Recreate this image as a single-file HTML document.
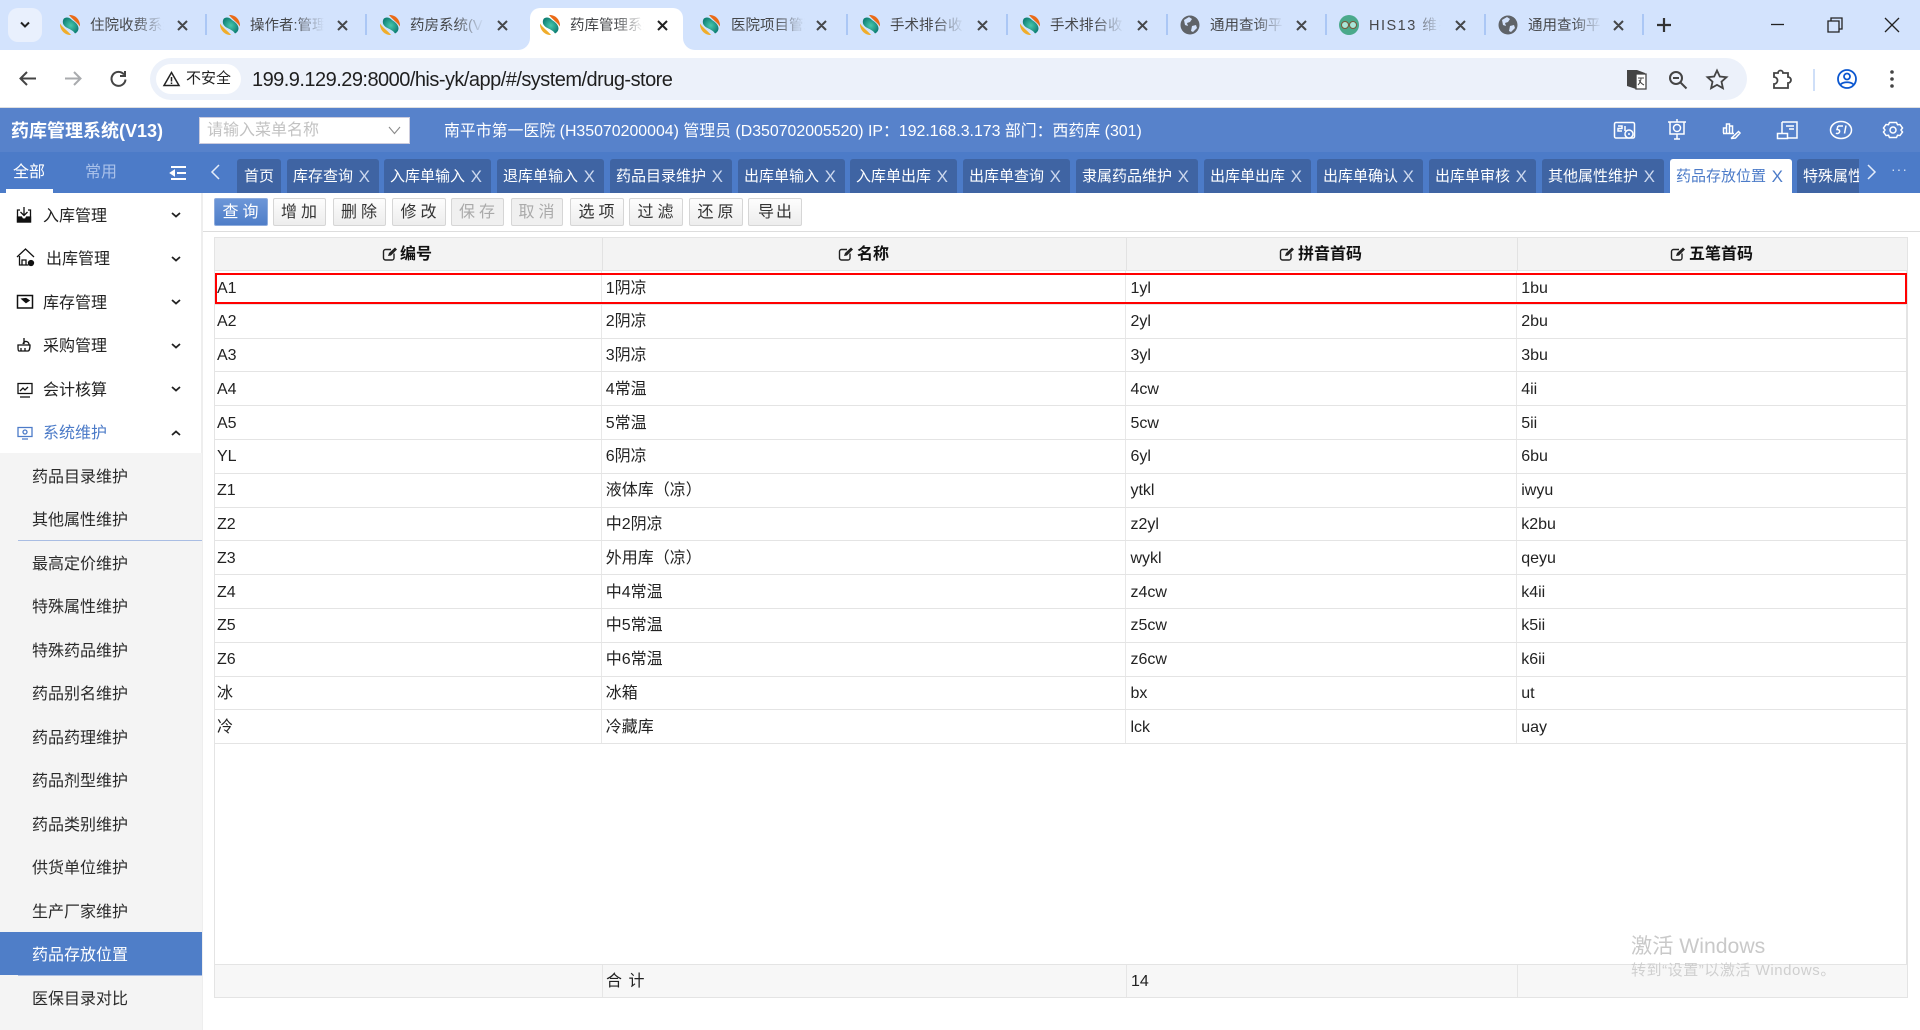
<!DOCTYPE html>
<html lang="zh-CN"><head><meta charset="utf-8"><title>药库管理系统</title>
<style>
*{box-sizing:border-box}
html,body{margin:0;padding:0;width:1920px;height:1030px;overflow:hidden;background:#fff;font-family:"Liberation Sans","Noto Sans CJK SC",sans-serif;color:#222}
.a{position:absolute;white-space:nowrap}
svg{position:absolute;overflow:visible}
.ttl{position:absolute;top:15px;height:22px;line-height:22px;font-size:14.5px;color:#45474a;width:74px;overflow:hidden;white-space:nowrap;-webkit-mask-image:linear-gradient(90deg,#000 60%,transparent 100%);mask-image:linear-gradient(90deg,#000 60%,transparent 100%)}
.sep{position:absolute;top:14px;width:2px;height:21px;background:#abc7f5}
.t{position:absolute;top:159px;height:34px;background:#3f64a3;color:#fff;font-size:15px;line-height:36px;border-radius:3px 3px 0 0;white-space:nowrap;overflow:hidden;padding-left:6px}
.t i{font-style:normal;font-size:17px;color:#ccd8ee;position:absolute;right:9px;top:0}
.b{position:absolute;top:198px;height:28px;border:1px solid #d6d6d6;border-radius:2px;background:linear-gradient(#fdfdfd,#ededed);font-size:16px;line-height:27px;text-align:center;letter-spacing:4px;padding-left:3px;color:#333}
.b.p{background:linear-gradient(#6c96d8,#4f7ec8);border-color:#8eacdd;color:#fff}
.b.d{background:#f0f0f0;color:#aaa}
.m{position:absolute;left:43px;font-size:16px;line-height:22px;white-space:nowrap;color:#222}
.s{position:absolute;left:32px;font-size:16px;line-height:22px;white-space:nowrap;color:#2a2a2a}
.r{display:flex;height:33.8px;border-bottom:1px solid #e4e4e4;font-size:16px;line-height:31px}
.r div{height:100%;border-right:1px solid #e8e8e8;padding:1.5px 0 0 4px;white-space:nowrap;overflow:hidden}
.r .c1{padding-left:2px}
.c1{width:387px}.c2{width:525px}.c3{width:391px}.c4{width:390px;border-right:0!important}
.h{position:absolute;top:238px;height:33px;font-size:16px;font-weight:bold;line-height:33px;color:#111;white-space:nowrap}
.ic{fill:none;stroke:#fff;stroke-width:1.5}
.mi{fill:none;stroke:#111;stroke-width:1.3}
</style></head><body>
<svg width="0" height="0" style="position:absolute"><defs>
<radialGradient id="tg" cx=".5" cy=".5" r=".55"><stop offset="0" stop-color="#47c6ad"/><stop offset="1" stop-color="#0f7f73"/></radialGradient>
<symbol id="fav" viewBox="0 0 20 20"><path d="M9 0C15.500-.5 20.500 5 20 11.500 17 7 13 5 9 0z" fill="#ea6a16"/><path d="M0 8.500C-.5 15 5 20.500 11 20 7 15 3 13 0 8.500z" fill="#f0ad2b"/><path d="M3.500 4C6 1.500 9.500 2.500 12 5c3 2 6 4 6.500 8 .2 2.500-1.500 4.500-3.500 5.500-1.500-2.500-4.500-4-7.500-5.500C4 11.500 1.500 8 3.500 4z" fill="url(#tg)"/></symbol>
<symbol id="globe" viewBox="0 0 20 20"><circle cx="10" cy="10" r="9.500" fill="#5f6368"/><path d="M4 5l5-3 3 2-2 3-3 1 1 3-3-1zM12 11l4-1 1 3-4 4-2-1z" fill="#d3e2fb"/></symbol>
<symbol id="edit" viewBox="0 0 16 16"><path d="M12 7.500V12a2 2 0 0 1-2 2H3.500a2 2 0 0 1-2-2V5.500a2 2 0 0 1 2-2H9" fill="none" stroke="#222" stroke-width="1.400"/><path d="M6 10l1-3 6-5.500 2 2L9 9.500z" fill="#222"/></symbol>
</defs></svg>

<!-- browser tab strip -->
<div class="a" style="left:0;top:0;width:1920px;height:50px;background:#d3e3fd"></div>
<div class="a" style="left:8px;top:8px;width:34px;height:34px;border-radius:10px;background:#e9f0fd"></div>
<svg style="left:20px;top:21px" width="10" height="8"><path d="M1 1.500l4 4 4-4" fill="none" stroke="#222" stroke-width="2"/></svg>
<div class="a" style="left:530px;top:8px;width:153px;height:42px;background:#fff;border-radius:10px 10px 0 0"></div>
<svg style="left:518px;top:38px" width="177" height="12"><path d="M0 12a12 12 0 0 0 12-12v12zM177 12a12 12 0 0 1-12-12v12z" fill="#fff"/></svg>

<svg style="left:60px;top:15px" width="20" height="20"><use href="#fav"/></svg><div class="ttl" style="left:90px">住院收费系统</div>
<svg style="left:220px;top:15px" width="20" height="20"><use href="#fav"/></svg><div class="ttl" style="left:250px">操作者:管理员</div>
<svg style="left:380px;top:15px" width="20" height="20"><use href="#fav"/></svg><div class="ttl" style="left:410px">药房系统(V13)</div>
<svg style="left:540px;top:15px" width="20" height="20"><use href="#fav"/></svg><div class="ttl" style="left:570px">药库管理系统</div>
<svg style="left:700px;top:15px" width="20" height="20"><use href="#fav"/></svg><div class="ttl" style="left:731px">医院项目管理</div>
<svg style="left:860px;top:15px" width="20" height="20"><use href="#fav"/></svg><div class="ttl" style="left:890px">手术排台收费</div>
<svg style="left:1020px;top:15px" width="20" height="20"><use href="#fav"/></svg><div class="ttl" style="left:1050px">手术排台收费</div>
<svg style="left:1180px;top:15px" width="20" height="20"><use href="#globe"/></svg><div class="ttl" style="left:1210px">通用查询平台</div>
<svg style="left:1339px;top:15px" width="20" height="20"><circle cx="10" cy="10" r="10" fill="#4aa98b"/><circle cx="6" cy="10" r="3.500" fill="#a9e6d8" stroke="#7a5a3a"/><circle cx="14" cy="10" r="3.500" fill="#a9e6d8" stroke="#7a5a3a"/></svg><div class="ttl" style="left:1369px;letter-spacing:1.500px;width:72px">HIS13 维护</div>
<svg style="left:1498px;top:15px" width="20" height="20"><use href="#globe"/></svg><div class="ttl" style="left:1528px">通用查询平台</div>

<svg style="left:0;top:0" width="1680" height="50"><g fill="none" stroke="#45474a" stroke-width="2"><path d="M178 21l9 9m0-9l-9 9M338 21l9 9m0-9l-9 9M498 21l9 9m0-9l-9 9M817 21l9 9m0-9l-9 9M978 21l9 9m0-9l-9 9M1138 21l9 9m0-9l-9 9M1297 21l9 9m0-9l-9 9M1456 21l9 9m0-9l-9 9M1614 21l9 9m0-9l-9 9"/><path d="M658 21l9 9m0-9l-9 9" stroke="#222"/><path d="M1664 18v14M1657 25h14" stroke="#333" stroke-width="2.200"/></g></svg>
<div class="sep" style="left:205px"></div><div class="sep" style="left:365px"></div><div class="sep" style="left:846px"></div><div class="sep" style="left:1006px"></div><div class="sep" style="left:1166px"></div><div class="sep" style="left:1325px"></div><div class="sep" style="left:1484px"></div><div class="sep" style="left:1642px"></div>
<svg style="left:1770px;top:15px" width="140" height="20"><g fill="none" stroke="#222" stroke-width="1.300"><path d="M1 9.500h13"/><path d="M58 6h11v11H58zM61 6V3h11v11h-3"/><path d="M115 3l14 14m0-14l-14 14"/></g></svg>

<!-- address bar -->
<div class="a" style="left:0;top:50px;width:1920px;height:57px;background:#fff;border-radius:10px 10px 0 0"></div>
<div class="a" style="left:150px;top:58px;width:1597px;height:42px;border-radius:21px;background:#ecf1fa"></div>
<div class="a" style="left:156px;top:64px;width:85px;height:30px;border-radius:15px;background:#fff"></div>
<svg style="left:18px;top:68px" width="110" height="22"><g fill="none" stroke="#444" stroke-width="2"><path d="M18 10.500H3M9 4l-6.500 6.500L9 17"/><path d="M62 10.500H47M56 4l6.500 6.500L56 17" stroke="#a9abae"/><path d="M106 6.500a7 7 0 1 0 1.500 5M107 3v5h-5"/></g></svg>
<svg style="left:163px;top:71px" width="17" height="16"><path d="M8.500 1.500L16 14.500H1zM8.500 6v4.500M8.500 11.500v1.500" fill="none" stroke="#222" stroke-width="1.500"/></svg>
<div class="a" style="left:186px;top:68px;font-size:15px;line-height:22px;color:#222">不安全</div>
<div class="a" style="left:252px;top:67px;font-size:20px;line-height:26px;color:#1f1f1f;letter-spacing:-.53px">199.9.129.29:8000/his-yk/app/#/system/drug-store</div>
<svg style="left:1625px;top:68px" width="280" height="24"><g fill="none" stroke="#444" stroke-width="2"><path d="M2 2h10l8 3v15l-9 1-9-3z" fill="#444" stroke="none"/><path d="M11 6h10v15H11z" fill="#fff" stroke="#444" stroke-width="1.300"/><path d="M13 10h6M16 10c0 4-2 6-3 7m1-5c1 2 3 4 5 5" stroke-width="1"/><circle cx="51" cy="10" r="6"/><path d="M48 10h6M55.500 14.500l6 6"/><path d="M92 2.500l2.800 6 6.700.7-5 4.500 1.400 6.500-5.900-3.300-5.900 3.300 1.400-6.500-5-4.500 6.700-.7z" stroke-width="1.800"/><path d="M149 5h4a2.500 2.500 0 0 1 5 0h5v4a2.500 2.500 0 0 1 0 6v5h-14v-4a3 3 0 0 0 0-7z" stroke-width="1.800"/></g><path d="M189 1v22" stroke="#cfdff8" stroke-width="2"/><circle cx="222" cy="11" r="9" fill="none" stroke="#0b57d0" stroke-width="1.800"/><circle cx="222" cy="8.500" r="3" fill="none" stroke="#0b57d0" stroke-width="1.800"/><path d="M215.500 16.500c3-3 10-3 13 0" fill="none" stroke="#0b57d0" stroke-width="1.800"/><circle cx="267" cy="4" r="1.800" fill="#444"/><circle cx="267" cy="11" r="1.800" fill="#444"/><circle cx="267" cy="18" r="1.800" fill="#444"/></svg>
<div class="a" style="left:0;top:107px;width:1920px;height:2px;background:#dfdfdf"></div>

<!-- app header -->
<div class="a" style="left:0;top:108px;width:1920px;height:44px;background:#5782cb"></div>
<div class="a" style="left:11px;top:119px;font-size:18px;font-weight:bold;line-height:24px;color:#fff">药库管理系统(V13)</div>
<div class="a" style="left:199px;top:117px;width:211px;height:27px;background:#fff;border:1px solid #ccd;font-size:16px;line-height:26px;padding-left:7px;color:#c2c2c2">请输入菜单名称</div>
<svg style="left:388px;top:126px" width="13" height="9"><path d="M1 1l5.500 6.500L12 1" fill="none" stroke="#8a8a8a" stroke-width="1.100"/></svg>
<div class="a" style="left:444px;top:121px;font-size:15.900px;line-height:22px;color:#fff">南平市第一医院 (H35070200004) 管理员 (D350702005520) IP：192.168.3.173 部门：西药库 (301)</div>
<svg style="left:1610px;top:115px" width="300" height="30"><g class="ic">
<rect x="4.500" y="7.500" width="20" height="15.500" rx="1.500"/><circle cx="19" cy="19" r="4" fill="#5782cb"/><path d="M18 19h2M8 11h4v2.500H8V16h4M15 11v5"/>
<path d="M58 7h18M60 7v12h14V7M67 19v5M64 24h6M67 4v3"/><circle cx="67" cy="13" r="3.500"/>
<path d="M113.500 18v-5h3v5M116.500 18V9h3v9M119.500 18v-7h3v7M113 18.500h11M121 23.500l7-6.500M121 23.500l4.500-.5 4.500-5-2-2"/>
<path d="M172 7h15v16h-10M172 7v11M167.500 18.500h10v5h-10zM176 11h8M179 14h5"/>
<ellipse cx="231" cy="15" rx="10.500" ry="8.500"/><path d="M228 11h5M228 11l-1 3.500c2 0 3 1 2.500 2.500s-2.500 2-3.500 1M236 10.500l-1.500 8"/>
<path d="M279.500 7.500h7l1 2.200 2.500-.2 2.500 3.500-1.500 2 1.500 2-2.500 3.500-2.500-.2-1 2.200h-7l-1-2.200-2.500.2-2.500-3.500 1.500-2-1.500-2 2.500-3.500 2.500.2z"/><circle cx="283" cy="15" r="3"/>
</g></svg>

<!-- tab row -->
<div class="a" style="left:0;top:152px;width:1920px;height:41px;background:#4c7bc8"></div>
<div class="a" style="left:13px;top:162px;font-size:16px;line-height:22px;color:#fff">全部</div>
<div class="a" style="left:85px;top:162px;font-size:16px;line-height:22px;color:#a9c1ea">常用</div>
<div class="a" style="left:6px;top:189px;width:47px;height:4px;background:#fff"></div>
<svg style="left:171px;top:166px" width="15" height="14"><path d="M0 1h15M6 7h9M0 13h15M0 7l3-2v4z" fill="none" stroke="#fff" stroke-width="2"/></svg>
<svg style="left:210px;top:164px" width="11" height="16"><path d="M9 1L2 8l7 7" fill="none" stroke="#e4ecf9" stroke-width="1.500"/></svg>
<div class="t" style="left:237px;width:44px;padding-left:7px">首页</div>
<div class="t" style="left:287px;width:92px">库存查询<i>X</i></div>
<div class="t" style="left:384px;width:107px">入库单输入<i>X</i></div>
<div class="t" style="left:497px;width:107px">退库单输入<i>X</i></div>
<div class="t" style="left:610px;width:122px">药品目录维护<i>X</i></div>
<div class="t" style="left:738px;width:107px">出库单输入<i>X</i></div>
<div class="t" style="left:850px;width:107px">入库单出库<i>X</i></div>
<div class="t" style="left:963px;width:107px">出库单查询<i>X</i></div>
<div class="t" style="left:1076px;width:122px">隶属药品维护<i>X</i></div>
<div class="t" style="left:1204px;width:107px">出库单出库<i>X</i></div>
<div class="t" style="left:1317px;width:106px">出库单确认<i>X</i></div>
<div class="t" style="left:1429px;width:107px">出库单审核<i>X</i></div>
<div class="t" style="left:1542px;width:122px">其他属性维护<i>X</i></div>
<div class="t" style="left:1670px;width:122px;background:#fff;color:#4c7bc8">药品存放位置<i style="color:#4c7bc8">X</i></div>
<div class="t" style="left:1797px;width:62px;border-radius:3px 0 0 0">特殊属性维护</div>
<svg style="left:1866px;top:164px" width="11" height="16"><path d="M2 1l7 7-7 7" fill="none" stroke="#e4ecf9" stroke-width="1.500"/></svg>
<div class="a" style="left:1891px;top:160px;font-size:14px;line-height:18px;color:#d5e0f4;letter-spacing:1px">···</div>

<!-- sidebar -->
<div class="a" style="left:0;top:193px;width:203px;height:837px;background:#fff;border-right:2px solid #eee"></div>
<div class="a" style="left:0;top:453px;width:202px;height:577px;background:#f4f4f4"></div>
<svg style="left:14px;top:206px" width="170" height="240"><g class="mi">
<path d="M6 4H3.500v12h13V4H14M10 1v8M6.500 6L10 9.500 13.500 6"/><path d="M3.500 11h4l1 2h3l1-2h4v5h-13z" fill="#111"/>
<path d="M3 51l8.500-8 8.500 8M5.500 50v9h9M8 59v-5h4v5"/><circle cx="17" cy="57" r="2.500" fill="#111"/>
<path d="M3.500 89.500h15v12.500h-15z" stroke-width="1.500"/><path d="M8 93l4 3.500 3-2-3-2z" fill="#111"/>
<path d="M10 132v6M5 139h10a3 3 0 0 0-6-1M4 139h12c0 4-1 6-2 6H5c-1 0-1-3-1-6zM7 142v3M11 142v3"/>
<path d="M4 177.500h14v10H4zM6 191h10M6 185l3-3 2 2 3-3"/>
<path d="M4 221.500h14v9H4zM8 233h6" stroke="#4c7bc8"/><circle cx="11" cy="226" r="2" stroke="#4c7bc8"/>
</g><g fill="none" stroke="#222" stroke-width="1.800"><path d="M158 7l4 3.500L166 7M158 51l4 3.500 4-3.500M158 94l4 3.500 4-3.500M158 138l4 3.500 4-3.500M158 181l4 3.500 4-3.500M158 229l4-3.500 4 3.500"/></g></svg>
<div class="m" style="top:206px">入库管理</div>
<div class="m" style="top:249px;left:46px">出库管理</div>
<div class="m" style="top:293px">库存管理</div>
<div class="m" style="top:336px">采购管理</div>
<div class="m" style="top:380px">会计核算</div>
<div class="m" style="top:423px;color:#4c7bc8">系统维护</div>
<div class="s" style="top:467px">药品目录维护</div>
<div class="s" style="top:510px">其他属性维护</div>
<div class="a" style="left:18px;top:540px;width:184px;height:1px;background:#a9bde3"></div>
<div class="s" style="top:554px">最高定价维护</div>
<div class="s" style="top:597px">特殊属性维护</div>
<div class="s" style="top:641px">特殊药品维护</div>
<div class="s" style="top:684px">药品别名维护</div>
<div class="s" style="top:728px">药品药理维护</div>
<div class="s" style="top:771px">药品剂型维护</div>
<div class="s" style="top:815px">药品类别维护</div>
<div class="s" style="top:858px">供货单位维护</div>
<div class="s" style="top:902px">生产厂家维护</div>
<div class="a" style="left:0;top:932px;width:202px;height:43px;background:#4f7ec8"></div>
<div class="a" style="left:18px;top:975px;width:184px;height:1px;background:#a9bde3"></div>
<div class="s" style="top:945px;color:#fff">药品存放位置</div>
<div class="s" style="top:989px">医保目录对比</div>

<!-- toolbar -->
<div class="b p" style="left:214px;width:54px">查询</div>
<div class="b" style="left:273px;width:53px">增加</div>
<div class="b" style="left:333px;width:53px">删除</div>
<div class="b" style="left:392px;width:54px">修改</div>
<div class="b d" style="left:451px;width:53px">保存</div>
<div class="b d" style="left:511px;width:52px">取消</div>
<div class="b" style="left:570px;width:54px">选项</div>
<div class="b" style="left:629px;width:54px">过滤</div>
<div class="b" style="left:689px;width:54px">还原</div>
<div class="b" style="left:748px;width:54px;letter-spacing:2px;padding-left:2px">导出</div>
<div class="a" style="left:203px;top:231px;width:1717px;height:1px;background:#ddd"></div>

<!-- table -->
<div class="a" style="left:214px;top:237px;width:1694px;height:761px;border:1px solid #e4e4e4;border-width:1px 2px 2px 1px"></div>
<div class="a" style="left:215px;top:238px;width:1692px;height:33px;background:#f3f3f3;border-bottom:1px solid #e4e4e4"></div>
<div class="a" style="left:602px;top:238px;width:1px;height:32px;background:#e2e2e2"></div>
<div class="a" style="left:1126px;top:238px;width:1px;height:32px;background:#e2e2e2"></div>
<div class="a" style="left:1517px;top:238px;width:1px;height:32px;background:#e2e2e2"></div>
<svg style="left:382px;top:246px" width="16" height="16"><use href="#edit"/></svg><div class="h" style="left:400px">编号</div>
<svg style="left:838px;top:246px" width="16" height="16"><use href="#edit"/></svg><div class="h" style="left:857px">名称</div>
<svg style="left:1279px;top:246px" width="16" height="16"><use href="#edit"/></svg><div class="h" style="left:1298px">拼音首码</div>
<svg style="left:1670px;top:246px" width="16" height="16"><use href="#edit"/></svg><div class="h" style="left:1689px">五笔首码</div>

<div class="a" style="left:215px;top:271px;width:1692px">
<div class="r"><div class="c1">A1</div><div class="c2">1阴凉</div><div class="c3">1yl</div><div class="c4">1bu</div></div>
<div class="r"><div class="c1">A2</div><div class="c2">2阴凉</div><div class="c3">2yl</div><div class="c4">2bu</div></div>
<div class="r"><div class="c1">A3</div><div class="c2">3阴凉</div><div class="c3">3yl</div><div class="c4">3bu</div></div>
<div class="r"><div class="c1">A4</div><div class="c2">4常温</div><div class="c3">4cw</div><div class="c4">4ii</div></div>
<div class="r"><div class="c1">A5</div><div class="c2">5常温</div><div class="c3">5cw</div><div class="c4">5ii</div></div>
<div class="r"><div class="c1">YL</div><div class="c2">6阴凉</div><div class="c3">6yl</div><div class="c4">6bu</div></div>
<div class="r"><div class="c1">Z1</div><div class="c2">液体库（凉）</div><div class="c3">ytkl</div><div class="c4">iwyu</div></div>
<div class="r"><div class="c1">Z2</div><div class="c2">中2阴凉</div><div class="c3">z2yl</div><div class="c4">k2bu</div></div>
<div class="r"><div class="c1">Z3</div><div class="c2">外用库（凉）</div><div class="c3">wykl</div><div class="c4">qeyu</div></div>
<div class="r"><div class="c1">Z4</div><div class="c2">中4常温</div><div class="c3">z4cw</div><div class="c4">k4ii</div></div>
<div class="r"><div class="c1">Z5</div><div class="c2">中5常温</div><div class="c3">z5cw</div><div class="c4">k5ii</div></div>
<div class="r"><div class="c1">Z6</div><div class="c2">中6常温</div><div class="c3">z6cw</div><div class="c4">k6ii</div></div>
<div class="r"><div class="c1">冰</div><div class="c2">冰箱</div><div class="c3">bx</div><div class="c4">ut</div></div>
<div class="r"><div class="c1">冷</div><div class="c2">冷藏库</div><div class="c3">lck</div><div class="c4">uay</div></div>
</div>
<div class="a" style="left:215px;top:273px;width:1692px;height:31px;border:2px solid #f00"></div>

<div class="a" style="left:215px;top:964px;width:1692px;height:33px;background:#f7f7f7;border-top:1px solid #e4e4e4"></div>
<div class="a" style="left:602px;top:965px;width:1px;height:32px;background:#e6e6e6"></div>
<div class="a" style="left:1126px;top:965px;width:1px;height:32px;background:#e6e6e6"></div>
<div class="a" style="left:1517px;top:965px;width:1px;height:32px;background:#e6e6e6"></div>
<div class="a" style="left:606px;top:971px;font-size:16px;line-height:22px;letter-spacing:1px">合 计</div>
<div class="a" style="left:1131px;top:971px;font-size:16px;line-height:22px">14</div>

<div class="a" style="left:1631px;top:934px;font-size:21.200px;line-height:26px;color:#c9c9c9">激活 Windows</div>
<div class="a" style="left:1631px;top:961px;font-size:15px;line-height:20px;color:#cfcfcf;letter-spacing:.55px">转到“设置”以激活 Windows。</div>
</body></html>
